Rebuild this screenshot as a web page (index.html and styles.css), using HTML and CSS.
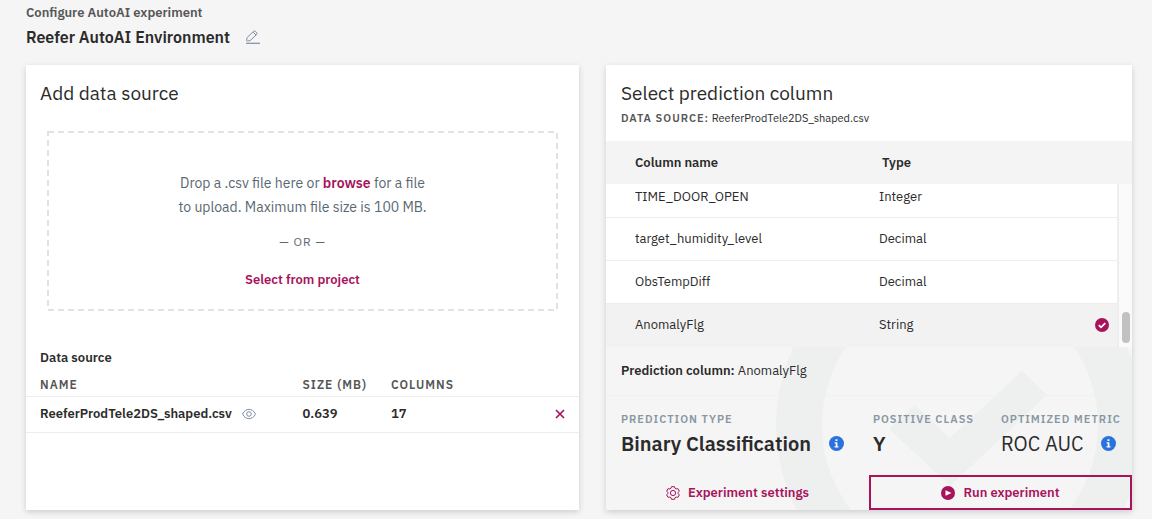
FILE: index.html
```html
<!DOCTYPE html>
<html lang="en">
<head>
<meta charset="utf-8">
<title>Configure AutoAI experiment</title>
<link rel="stylesheet" href="styles.css">
</head>
<body>
<header class="page-header">
  <p class="page-kicker">Configure AutoAI experiment</p>
  <div class="page-title-row">
    <h1 class="page-title">Reefer AutoAI Environment</h1>
    <button class="icon-button" type="button" aria-label="Edit name">
      <svg width="14" height="14" viewBox="0 0 14 14" fill="none" stroke="#7d8fa3"><path d="M0 13.300h14" stroke-width="1.200"/><path d="M.6 10.400l.5-2.800 6.700-6.500q.6-.5 1.200 0l1.900 1.900q.5.600 0 1.200L4.200 10.600l-2.800.5q-.9.100-.8-.7zM7.200 2.200l2.800 2.800"/></svg>
    </button>
  </div>
</header>
<main class="panels">
  <section class="card source-card">
    <h2 class="card-title">Add data source</h2>
    <div class="dropzone">
      <p class="drop-text">Drop a .csv file here or <a href="#browse">browse</a> for a file<br>to upload. Maximum file size is 100 MB.</p>
      <p class="drop-or">— OR —</p>
      <button class="text-button" type="button">Select from project</button>
      <svg class="drop-outline" aria-hidden="true"><rect width="100%" height="100%"/></svg>
    </div>
    <h3 class="table-title">Data source</h3>
    <table class="source-table">
      <thead><tr><th class="col-name">Name</th><th class="col-size">Size (MB)</th><th>Columns</th><th class="col-remove"></th></tr></thead>
      <tbody><tr>
        <td><span class="file-name">ReeferProdTele2DS_shaped.csv
          <button class="icon-button" type="button" aria-label="Preview"><svg width="14" height="12" viewBox="0 0 14 12" fill="none" stroke="#7d8fa3"><path d="M.5 6C3.500-.2 10.500-.2 13.500 6C10.500 12.200 3.500 12.200.5 6z"/><circle cx="7" cy="6" r="2.300"/></svg></button></span></td>
        <td>0.639</td><td>17</td>
        <td class="col-remove"><button class="icon-button" type="button" aria-label="Remove"><svg width="10" height="10" viewBox="0 0 10 10" stroke="#a8135c" stroke-width="1.700"><path d="M1 1l8 8M9 1L1 9"/></svg></button></td>
      </tr></tbody>
    </table>
  </section>
  <section class="card prediction-card">
    <div class="prediction-head">
      <h2 class="card-title">Select prediction column</h2>
      <p class="source-line"><span class="source-label">Data source:</span> ReeferProdTele2DS_shaped.csv</p>
    </div>
    <div class="grid-head"><span>Column name</span><span>Type</span></div>
    <div class="grid-body">
      <table class="column-table">
        <tbody>
          <tr class="first-row"><td class="col-field">TIME_DOOR_OPEN</td><td>Integer</td><td class="col-check"></td></tr>
          <tr><td>target_humidity_level</td><td>Decimal</td><td></td></tr>
          <tr><td>ObsTempDiff</td><td>Decimal</td><td></td></tr>
          <tr class="selected"><td>AnomalyFlg</td><td>String</td><td class="col-check"><svg width="14" height="14" viewBox="0 0 14 14"><circle cx="7" cy="7" r="7" fill="#a8135c"/><path d="M3.800 7.200l2.200 2.200 4.300-4.300" fill="none" stroke="#fff" stroke-width="1.700"/></svg></td></tr>
        </tbody>
      </table>
      <div class="scroll-track"><div class="scroll-thumb"></div></div>
    </div>
    <div class="summary">
      <svg class="watermark" viewBox="0 0 368 368" aria-hidden="true"><circle cx="184" cy="184" r="161" fill="none" stroke="#eef0f0" stroke-width="46"/><path d="M139 164l35 33 72-67 25 24-97 91-61-57z" fill="#eef0f0"/></svg>
      <p class="chosen"><b>Prediction column:</b> AnomalyFlg</p>
      <dl class="metrics">
        <div class="metric"><dt>Prediction type</dt><dd><b>Binary Classification</b><svg class="info" viewBox="0 0 15 15"><circle cx="7.500" cy="7.500" r="7.500" fill="#2a72de"/><path d="M6.500 3.200h1.900v1.700H6.500zM5.600 6.200h2.800v4h1.100v1.200h-4v-1.200h1.200v-2.800H5.600z" fill="#fff"/></svg></dd></div>
        <div class="metric"><dt>Positive class</dt><dd><b>Y</b></dd></div>
        <div class="metric"><dt>Optimized metric</dt><dd>ROC AUC<svg class="info" viewBox="0 0 15 15"><circle cx="7.500" cy="7.500" r="7.500" fill="#2a72de"/><path d="M6.500 3.200h1.900v1.700H6.500zM5.600 6.200h2.800v4h1.100v1.200h-4v-1.200h1.200v-2.800H5.600z" fill="#fff"/></svg></dd></div>
      </dl>
      <div class="actions">
        <button class="action" type="button"><svg width="14" height="14" viewBox="0 0 14 14" fill="none" stroke="#a8135c"><path d="M5.500.7h3l.5 1.600 1.200.7 1.700-.4 1.500 2.500-1.200 1.200v1.400l1.200 1.200-1.500 2.500-1.700-.4-1.200.7-.5 1.600h-3L5 11.700 3.800 11l-1.700.4L.6 8.900l1.200-1.200V6.300L.6 5.100l1.500-2.500 1.700.4L5 2.300z"/><circle cx="7" cy="7" r="2.600"/></svg>Experiment settings</button>
        <button class="action run" type="button"><svg width="14" height="14" viewBox="0 0 14 14"><circle cx="7" cy="7" r="7" fill="#a8135c"/><path d="M4.500 4.300L10.500 7l-6 2.700z" fill="#fff"/></svg>Run experiment</button>
      </div>
    </div>
  </section>
</main>
</body>
</html>
```
FILE: styles.css
```css
* { box-sizing: border-box; }
body {
  margin: 0;
  min-height: 100vh;
  padding: 4px 20px 9px 26px;
  display: flex;
  flex-direction: column;
  background: #f5f5f5;
  color: #2b2b2b;
  font-family: "IBM Plex Sans", Roboto, sans-serif;
  font-size: 13px;
  line-height: 18px;
}
h1, h2, h3, p, dl, dd { margin: 0; }
b, h3, th { font-weight: 600; }
button { padding: 0; border: 0; background: none; font: inherit; color: inherit; cursor: pointer; }
svg { display: block; flex: none; }
table { border-collapse: collapse; width: 100%; }
th, td { padding: 0; text-align: left; }
.page-header { height: 61px; flex: none; }
.page-kicker { font-weight: 600; color: #565656; }
.page-title-row { display: flex; align-items: center; gap: 16px; padding-top: 3px; }
.page-title { font-size: 16px; line-height: 24px; font-weight: 600; }
.panels { flex: 1; display: grid; grid-template-columns: 553fr 526fr; gap: 27px; }
.card { background: #fff; box-shadow: 0 2px 6px rgba(0, 0, 0, .16); display: flex; flex-direction: column; min-width: 0; }
.card-title { font-size: 19px; line-height: 28px; font-weight: 400; }
.source-card > .card-title { padding: 14px 14px 0; }
.dropzone { position: relative; margin: 24px 21px 0; height: 180px; padding-top: 40px; display: flex; flex-direction: column; align-items: center; color: #5a6872; text-align: center; }
.drop-outline { position: absolute; inset: 1px; width: calc(100% - 2px); height: calc(100% - 2px); overflow: visible; pointer-events: none; }
.drop-outline rect { fill: none; stroke: #dfe3e6; stroke-width: 2px; stroke-dasharray: 6px 4px; }
.drop-text { font-size: 14px; line-height: 24px; }
.drop-text a { color: #a8135c; font-weight: 600; text-decoration: none; }
.drop-or { font-size: 12px; letter-spacing: 1px; margin: 14px 0 20px; }
.text-button { color: #a8135c; font-weight: 600; }
.table-title { font-size: 13px; padding: 38px 14px 0; }
.source-table th { height: 29px; padding-top: 7px; font-size: 12px; letter-spacing: 1px; text-transform: uppercase; color: #565656; }
.source-table td { height: 36px; font-weight: 600; }
.source-table tbody tr { border-top: 1px solid #ededed; border-bottom: 1px solid #ededed; }
.source-table th:first-child, .source-table td:first-child { padding-left: 14px; }
.col-name { width: 50%; }
.col-size { width: 16%; }
.file-name { display: flex; align-items: center; gap: 10px; }
.source-table .col-remove { width: 40px; padding-right: 14px; }
.col-remove button { display: block; margin-left: auto; }
.prediction-head { padding: 14px 15px 0; height: 76px; }
.source-line { font-size: 11px; line-height: 22px; }
.source-label { font-weight: 600; letter-spacing: 1px; text-transform: uppercase; color: #565656; }
.grid-head { display: grid; grid-template-columns: 247fr 250fr; height: 43px; padding-left: 29px; align-items: center; background: #f4f4f4; font-weight: 600; }
.grid-body { display: flex; }
.column-table { flex: 1; }
.column-table td { height: 43px; }
.column-table .first-row td { height: 33px; padding-bottom: 6px; }
.column-table tr { border-bottom: 1px solid #ededed; }
.column-table td:first-child { padding-left: 29px; }
.column-table .selected { background: #f2f2f2; border-color: #f2f2f2; }
.column-table .col-field { width: 273px; }
.column-table .col-check { width: 40px; padding-right: 8px; }
.col-check svg { margin-left: auto; }
.scroll-track { width: 15px; display: flex; flex-direction: column; justify-content: flex-end; align-items: center; padding-bottom: 4px; background: #fafafa; border-left: 2px solid #eee; }
.scroll-thumb { width: 8px; height: 31px; border-radius: 4px; background: #c1c1c1; }
.summary { position: relative; flex: 1; display: flex; flex-direction: column; overflow: hidden; background: #f5f5f5; isolation: isolate; }
.watermark { position: absolute; z-index: -1; width: 368px; right: -12px; top: -106px; }
.chosen { height: 49px; padding: 15px 15px 0; border-bottom: 1px solid #f1f1f1; }
.metrics { display: grid; grid-template-columns: minmax(0, 252fr) minmax(0, 128fr) minmax(0, 116fr); padding: 14px 15px 0; }
.metric dt { font-size: 11px; line-height: 18px; font-weight: 600; letter-spacing: 1px; text-transform: uppercase; color: #8897a2; white-space: nowrap; }
.metric dd { display: flex; align-items: center; gap: 18px; font-size: 20px; line-height: 32px; white-space: nowrap; }
.info { width: 15px; height: 15px; }
.actions { display: grid; grid-template-columns: 1fr 1fr; height: 35px; margin-top: auto; }
.action { display: flex; align-items: center; justify-content: center; gap: 8px; color: #a8135c; font-weight: 600; }
.run { border: 2px solid #a8135c; }
```
